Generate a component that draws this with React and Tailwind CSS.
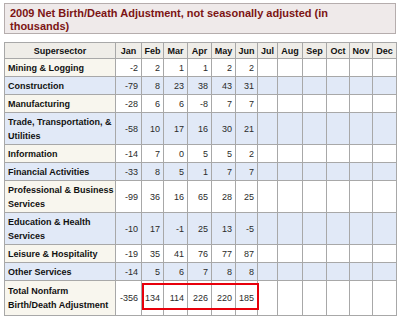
import React from 'react'

const months = ['Jan', 'Feb', 'Mar', 'Apr', 'May', 'Jun', 'Jul', 'Aug', 'Sep', 'Oct', 'Nov', 'Dec']
const colWidths = [111, 26, 22, 24, 24, 24, 22, 20, 25, 24, 23, 23, 24]

const rows = [
  { label: ['Mining & Logging'], values: [-2, 2, 1, 1, 2, 2] },
  { label: ['Construction'], values: [-79, 8, 23, 38, 43, 31] },
  { label: ['Manufacturing'], values: [-28, 6, 6, -8, 7, 7] },
  { label: ['Trade, Transportation, &', 'Utilities'], values: [-58, 10, 17, 16, 30, 21] },
  { label: ['Information'], values: [-14, 7, 0, 5, 5, 2] },
  { label: ['Financial Activities'], values: [-33, 8, 5, 1, 7, 7] },
  { label: ['Professional & Business', 'Services'], values: [-99, 36, 16, 65, 28, 25] },
  { label: ['Education & Health', 'Services'], values: [-10, 17, -1, 25, 13, -5] },
  { label: ['Leisure & Hospitality'], values: [-19, 35, 41, 76, 77, 87] },
  { label: ['Other Services'], values: [-14, 5, 6, 7, 8, 8] },
  { label: ['Total Nonfarm', 'Birth/Death Adjustment'], values: [-356, 134, 114, 226, 220, 185] },
]

function App() {
  return (
    <div className="w-[400px] h-[320px] bg-white overflow-hidden pt-[3px] px-[4px] font-['Liberation_Sans',Arial,sans-serif]">
      {/* Title */}
      <div className="border border-[#b5adad] bg-[#efeaea] pl-[5px] pr-[8px] pt-[3px] pb-[3px] h-[31px]">
        <h1 className="text-[11px] leading-[13px] font-bold text-[#7c1414]">
          2009 Net Birth/Death Adjustment, not seasonally adjusted (in thousands)
        </h1>
      </div>

      {/* Table */}
      <div className="relative mt-[8px]">
        <table className="table-fixed border-collapse w-[392px] border border-[#8f8f8f] text-[9px] leading-[14px]">
          <colgroup>
            {colWidths.map((w, i) => (
              <col key={i} style={{ width: w }} />
            ))}
          </colgroup>
          <thead>
            <tr className="bg-[#efede8]">
              <th className="border border-[#a8a8a8] font-bold text-[#111] text-center py-[0.5px]">Supersector</th>
              {months.map((m) => (
                <th key={m} className="border border-[#a8a8a8] font-bold text-[#111] text-center py-[0.5px] px-0">
                  {m}
                </th>
              ))}
            </tr>
          </thead>
          <tbody>
            {rows.map((row, i) => {
              const even = i % 2 === 1
              const last = i === rows.length - 1
              return (
                <tr key={i} className={even ? 'bg-[#e1e9f7]' : 'bg-white'}>
                  <td
                    className={`border border-[#a8a8a8] font-bold text-[#111] pl-[3px] pr-[2px] ${
                      last ? 'py-[3px]' : 'py-[1.5px]'
                    } ${even ? '' : 'bg-[#f8f6ee]'}`}
                  >
                    {row.label.map((l, j) => (
                      <div key={j} className="whitespace-nowrap">{l}</div>
                    ))}
                  </td>
                  {months.map((m, j) => (
                    <td key={m} className="border border-[#a8a8a8] text-right text-[#2a2a2a] pr-[3px] pl-0 py-[1.5px]">
                      {row.values[j] !== undefined ? row.values[j] : ''}
                    </td>
                  ))}
                </tr>
              )
            })}
          </tbody>
        </table>

        {/* Highlight box over Feb-Jun totals */}
        <div className="absolute left-[138px] top-[241px] w-[117px] h-[27px] border-2 border-[#e8000b] pointer-events-none" />
      </div>
    </div>
  )
}

export default App
